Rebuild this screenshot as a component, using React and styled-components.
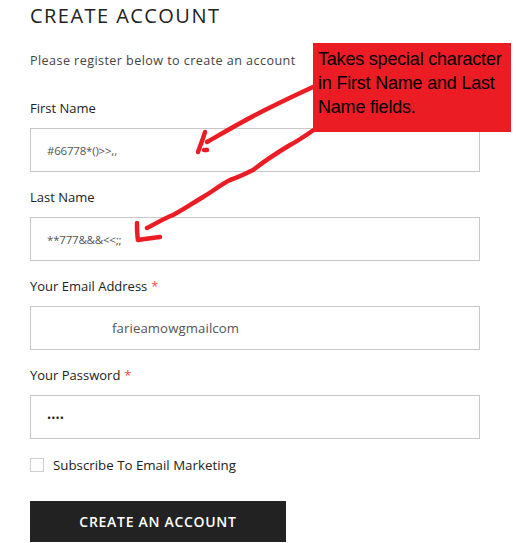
import React from "react";
import styled, { createGlobalStyle } from "styled-components";

const GlobalStyle = createGlobalStyle`
  html, body {
    margin: 0;
    padding: 0;
    background: #fff;
  }
  body {
    font-family: "Open Sans", "Liberation Sans", sans-serif;
    color: #222;
  }
`;

const fields = [
  { label: "First Name", value: "#66778*()>>,,", required: false, tight: true },
  { label: "Last Name", value: "**777&&&<<;;", required: false, tight: true },
  { label: "Your Email Address", value: "farieamowgmailcom", required: true, indent: 65 },
  { label: "Your Password", value: "••••", required: true, dots: true },
];

const App = () => {
  return (
    <Page>
      <GlobalStyle />
      <Title>CREATE ACCOUNT</Title>
      <Intro>Please register below to create an account</Intro>
      <Form>
        {fields.map(field => (
          <Field key={field.label}>
            <Label>
              {field.label}
              {field.required && <Star>*</Star>}
            </Label>
            <Input $indent={field.indent} $dots={field.dots} $tight={field.tight}>
              {field.value}
            </Input>
          </Field>
        ))}
        <CheckRow>
          <Box />
          <CheckLabel>Subscribe To Email Marketing</CheckLabel>
        </CheckRow>
        <Submit>CREATE AN ACCOUNT</Submit>
      </Form>

      <Note>
        Takes special character in First Name and Last Name fields.
      </Note>
      <Arrows width="516" height="543" viewBox="0 0 516 543">
        <g fill="none" stroke="#ec1c24" strokeWidth="4.5" strokeLinecap="round" strokeLinejoin="round">
          <path d="M313 87 C300 93 285 100 265 110 C245 120 228 130 207 142" />
          <path d="M205 132 C203 139 200 146 198 152" />
          <path d="M204 150 L207 150" />
          <path d="M318 127 C305 136 298 141 290 145 C275 154 262 163 253 170 C243 175 236 178 230 180 C220 185 212 192 203 197 C193 203 183 210 173 215 C163 219 155 224 147 228" />
          <path d="M137 223 C137 229 137 235 138 240 C145 239 152 238 160 237" />
        </g>
      </Arrows>
    </Page>
  );
};

const Page = styled.div`
  position: relative;
  width: 516px;
  height: 543px;
  overflow: hidden;
  padding: 4px 0 0 30px;
  box-sizing: border-box;
`;

const Title = styled.h1`
  margin: 0;
  font-size: 20px;
  font-weight: 400;
  letter-spacing: 1.45px;
  line-height: 24px;
  color: #222;
`;

const Intro = styled.p`
  margin: 25px 0 0;
  font-size: 12.6px;
  letter-spacing: 0.42px;
  line-height: 16px;
  color: #444;
`;

const Form = styled.div`
  display: flex;
  flex-direction: column;
  margin-top: 30px;
`;

const Field = styled.div`
  display: flex;
  flex-direction: column;
  margin-bottom: 16px;
`;

const Label = styled.div`
  font-size: 13px;
  font-weight: 500;
  line-height: 18px;
  color: #222;
  margin-bottom: 11px;
`;

const Star = styled.span`
  color: #e74c3c;
  margin-left: 4px;
`;

const Input = styled.div`
  width: 450px;
  height: 44px;
  box-sizing: border-box;
  border: 1px solid #c8c8c8;
  display: flex;
  align-items: center;
  padding-left: ${p => 16 + (p.$indent || 0)}px;
  font-size: ${p => (p.$dots ? "11px" : p.$tight ? "11.5px" : "13.2px")};
  letter-spacing: ${p => (p.$tight ? "-0.2px" : "0.1px")};
  color: ${p => (p.$dots ? "#222" : "#555")};
`;

const CheckRow = styled.div`
  display: flex;
  align-items: center;
  gap: 9px;
  margin-top: 1px;
`;

const Box = styled.span`
  width: 14px;
  height: 14px;
  box-sizing: border-box;
  border: 1px solid #cfcfcf;
  background: #fff;
`;

const CheckLabel = styled.span`
  font-size: 13.3px;
  font-weight: 500;
  line-height: 18px;
  color: #222;
`;

const Submit = styled.button`
  margin-top: 27px;
  width: 256px;
  height: 41px;
  border: 0;
  background: #222;
  color: #fff;
  font-family: inherit;
  font-size: 14px;
  font-weight: 600;
  letter-spacing: 0.7px;
  padding: 0;
`;

const Note = styled.div`
  position: absolute;
  left: 313px;
  top: 43px;
  width: 198px;
  height: 89px;
  box-sizing: border-box;
  padding: 4px 2px 0 5px;
  background: #ec1c24;
  color: #000;
  font-family: "Liberation Sans", Arial, sans-serif;
  font-size: 18px;
  line-height: 24px;
  letter-spacing: -0.2px;
`;

const Arrows = styled.svg`
  position: absolute;
  left: 0;
  top: 0;
  pointer-events: none;
`;

export default App;
